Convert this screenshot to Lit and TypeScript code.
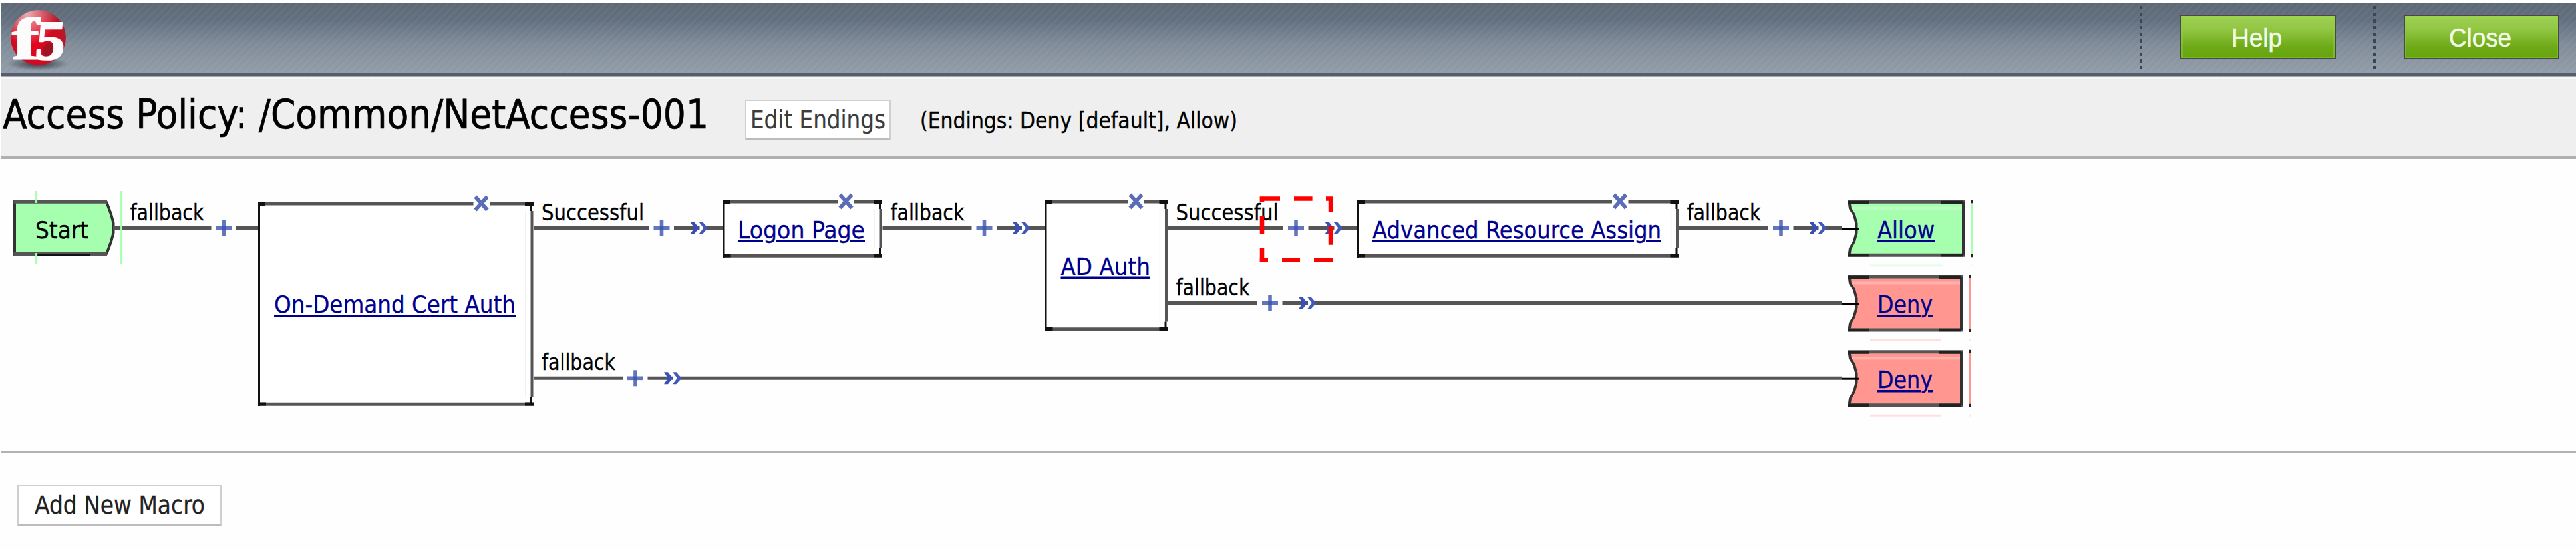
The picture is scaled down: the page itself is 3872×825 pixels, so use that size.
import { LitElement, html, svg, css } from "lit";
import { customElement } from "lit/decorators.js";

interface Item { name: string; x: number; y: number; w: number; h: number; tx: number; tw: number; ty: number; del: number; }
interface Branch { label: string; tw: number; x: number; y: number; gap: number; to: number; arrow: number; }
interface Ending { name: string; kind: string; y: number; right: number; tw: number; }

const ITEMS: Item[] = [
  { name: "On-Demand Cert Auth", x: 388, y: 303, w: 414, h: 307, tx: 412, tw: 363, ty: 470, del: 723.5 },
  { name: "Logon Page", x: 1086.5, y: 300, w: 239.5, h: 87, tx: 1109, tw: 191, ty: 357.5, del: 1271.5 },
  { name: "AD Auth", x: 1570.5, y: 300, w: 185, h: 197.5, tx: 1594.5, tw: 134.5, ty: 412.5, del: 1707.5 },
  { name: "Advanced Resource Assign", x: 2040, y: 300, w: 483.5, h: 87, tx: 2063, tw: 434, ty: 357.5, del: 2435 },
];

const BRANCHES: Branch[] = [
  { label: "fallback", tw: 111, x: 184, y: 342.5, gap: 317.5, to: 388, arrow: 0 },
  { label: "Successful", tw: 154, x: 802, y: 342.5, gap: 975.5, to: 1087, arrow: 1037.5 },
  { label: "fallback", tw: 111, x: 802, y: 568.3, gap: 936, to: 2768, arrow: 998 },
  { label: "fallback", tw: 111, x: 1326.5, y: 342.5, gap: 1460.5, to: 1571, arrow: 1522 },
  { label: "Successful", tw: 154, x: 1755.5, y: 342.5, gap: 1929, to: 2041, arrow: 1991.5 },
  { label: "fallback", tw: 111, x: 1755.5, y: 455.5, gap: 1890, to: 2768, arrow: 1952 },
  { label: "fallback", tw: 111, x: 2523.5, y: 342.5, gap: 2658, to: 2768, arrow: 2719.5 },
];

const ENDINGS: Ending[] = [
  { name: "Allow", kind: "allow", y: 300.7, right: 2953, tw: 86 },
  { name: "Deny", kind: "deny", y: 413.5, right: 2950, tw: 83 },
  { name: "Deny", kind: "deny", y: 526.2, right: 2950, tw: 83 },
];

const OX = 0;
const OY = 239;

/** One run of text set to an exact advance width. */
const fit = (text: string, width: number, height: number, base: number, cls: string) => html`
  <svg class="fit" width=${width} height=${height} viewBox="0 0 ${width} ${height}">
    <text class=${cls} x="0" y=${base} textLength=${width} lengthAdjust="spacingAndGlyphs">${text}</text>
  </svg>`;

@customElement("app-root")
export class AppRoot extends LitElement {
  static styles = css`
    :host { display: block; height: 825px; background: #fefefe; overflow: hidden;
      font-family: "DejaVu Sans Condensed", "DejaVu Sans", sans-serif; font-stretch: condensed; }
    .page { display: flex; flex-direction: column; padding: 4px 0 0 2px; height: 821px; }
    .bar { display: flex; align-items: flex-start; height: 106px; flex: none; padding-left: 10px;
      border-bottom: 4px solid #52606e; position: relative;
      background:
        repeating-linear-gradient(135deg, rgba(255,255,255,0) 0, rgba(255,255,255,.055) 4px, rgba(255,255,255,0) 8px),
        linear-gradient(#5a6773 0, #616e7e 25%, #7e8a97 58%, #929ca9 100%); }
    .logo { display: block; flex: none; }
    .spacer { flex: 1; }
    .sep { flex: none; margin-top: 3px; height: 96px;
      background: repeating-linear-gradient(transparent 0 2px, #3a4655 2px 7px, transparent 7px 10px); }
    .s1 { width: 3px; margin-right: 58px; }
    .s2 { width: 5px; margin: 3px 41px 0 56px; }
    .green { box-sizing: border-box; width: 234px; height: 67px; margin-top: 18px; flex: none;
      border: 2.5px solid #4a464e; display: flex; justify-content: center; align-items: flex-start; padding-right: 4px;
      background: linear-gradient(#a0d957 0, #9ccd51 8%, #92c744 30%, #6fab19 72%, #66a30d 100%);
      box-shadow: inset 0 0 0 2px rgba(140,215,50,.45); }
    .last { margin-right: 25.5px; }
    .title { display: flex; flex: none; height: 121px; border-bottom: 4px solid #b0b0b0; background: #efefef;
      box-shadow: inset 0 2px 0 #a8a8a8, inset 0 4px 0 #f6f6f6; padding-left: 2px; align-items: flex-start; }
    .btn { box-sizing: border-box; background: #fff; border: 2.5px solid #cfcfcf; border-bottom: 3px solid #bcbcbc;
      display: flex; align-items: flex-start; flex: none; }
    .edit { width: 219px; height: 61px; margin: 36px 44px 0 55px; padding-left: 6px; }
    .macro { width: 307px; height: 62px; margin: 48px 0 0 24px; padding-left: 24px; }
    .canvas { display: block; flex: none; margin-left: -2px; height: 439px; overflow: visible; }
    .rule { flex: none; height: 3px; background: #b2b2b2; }
    .fit { display: block; overflow: visible; flex: none; }
    .h1 { font-size: 61px; fill: #000; stroke: #000; stroke-width: .7; }
    .t-btn { font-size: 37px; fill: #3c3c3c; stroke: #3c3c3c; stroke-width: .2; }
    .t-macro { font-size: 37.5px; fill: #222; stroke: #222; stroke-width: .3; }
    .t-note { font-size: 33px; fill: #000; stroke: #000; stroke-width: .3; }
    .t-green { font-family: "Liberation Sans", sans-serif; font-size: 38.5px; fill: #f2f9e6; stroke: #f2f9e6; stroke-width: .6; }
    .f5 { font-family: "Liberation Serif", serif; font-weight: 700; fill: #fcfcfc; stroke: #fcfcfc; stroke-width: 2; stroke-linejoin: round; }
    .lbl { font-size: 33.5px; fill: #000; stroke: #000; stroke-width: .3; }
    .name { font-size: 36px; fill: #00008f; stroke: #00008f; stroke-width: .3; }
    .start { fill: #000; font-size: 36px; stroke: #000; stroke-width: .3; }
    .ul { stroke: #00008f; stroke-width: 3.4; }
    .wire { stroke: #555; stroke-width: 5; fill: none; }
    .v { stroke: #111; stroke-width: 3; }
    .cap { stroke: #111; stroke-width: 5; }
    .white { fill: #fff; }
    .plus { stroke: #3a54ac; stroke-opacity: .8; stroke-width: 5.6; fill: none; }
    .x { stroke: #5b6cb8; stroke-width: 5.8; fill: none; }
    .allow { fill: #a5ffaf; } .deny { fill: #ff9790; }
    .edge { fill: none; stroke: #333; stroke-width: 4; }
    .red { stroke: #f00; stroke-width: 6.5; fill: none; }
  `;

  private wire(b: Branch) {
    const cx = b.gap + 19;
    return svg`
      <path class="wire" d="M${b.x} ${b.y}H${b.gap}M${b.gap + 37.5} ${b.y}H${b.to}" />
      <path class="plus" d="M${cx - 12} ${b.y}H${cx + 12}" />
      <path class="plus" d="M${cx} ${b.y - 12}V${b.y + 12}" />
      ${b.arrow ? svg`
        <g transform="translate(${b.arrow} ${b.y - 9})">
          <rect x="14" y="5" width="10" height="8" fill="#fefefe" />
          <path d="M0 0H6L13 9L6 18H0L4 12V6Z" fill="#3a4fb5" />
          <path d="M13 0H18.500L26.500 9L18.500 18H13L20 9Z" fill="#4359b8" />
        </g>` : ""}
      <text class="lbl" x=${b.x < 200 ? 195.5 : b.x + 12} y=${b.y - 12}
        textLength=${b.tw} lengthAdjust="spacingAndGlyphs">${b.label}</text>`;
  }

  private item(i: Item) {
    const r = i.x + i.w, b = i.y + i.h;
    return svg`
      <rect class="white" x=${i.x} y=${i.y} width=${i.w} height=${i.h} />
      <path class="wire" d="M${i.x} ${i.y + 3}H${i.del - 12}M${i.del + 12.5} ${i.y + 3}H${r}M${i.x} ${b - 2.7}H${r}" />
      <path class="v" d="M${i.x + 1.5} ${i.y + 1}V${b}" />
      <path d="M${r - 2.5} ${i.y + 14}V${b - 14}" stroke="#555" stroke-width="4" />
      <path class="v" d="M${r - 3.500} ${i.y + 2}V${i.y + 14}M${r - 3.500} ${b - 14}V${b - 1}" />
      <path class="cap" d="M${i.x} ${i.y + 3.500}h11M${r - 13} ${i.y + 3.500}h13M${i.x} ${b - 3}h12M${r - 13} ${b - 3}h13" />
      <path d="M${r - 12} ${i.y + 14}V${b - 14}" stroke="#eee" stroke-width="1.5" />
      <path class="x" d="M${i.del - 9} ${i.y - 7.500}L${i.del + 9} ${i.y + 12.500}M${i.del + 9} ${i.y - 7.500}L${i.del - 9} ${i.y + 12.500}" />
      <text class="name" x=${i.tx} y=${i.ty} textLength=${i.tw} lengthAdjust="spacingAndGlyphs">${i.name}</text>
      ${this.underline(i.name, i.tx, i.tw, i.ty)}`;
  }

  private underline(name: string, x: number, w: number, y: number) {
    // Gaps where a descender crosses the line.
    const cuts: Record<string, [number, number][]> = {
      "Logon Page": [[38, 57], [150, 169]],
      "Advanced Resource Assign": [[393, 411]],
      Deny: [[66, 76]],
    };
    let d = "", p = x;
    for (const [a, b] of cuts[name] ?? []) { d += `M${p} ${y + 4.8}H${x + a}`; p = x + b; }
    d += `M${p} ${y + 4.8}H${x + w}`;
    return svg`<path class="ul" d=${d} />`;
  }

  private ending(e: Ending) {
    const t = e.y + 2.5, b = e.y + 82.5, m = e.y + 42, r = e.right - 2, s = e.right + 11.5;
    const c = e.kind === "allow" ? "#a5ffaf" : "#ff9790";
    const notch = `M2779.5 ${t}L2781 ${t + 10}L2787 ${m - 20}L2790.5 ${m - 7}V${m + 7}L2787 ${m + 20}L2781 ${b - 10}L2779.5 ${b}`;
    return svg`
      <path class=${e.kind} d="${notch}H${r}V${t}Z" />
      <path d="M2782 ${e.y + 12}H${r}" stroke="#fff" stroke-opacity=".25" stroke-width="4" />
      <path class="edge" d=${notch} />
      <path class="wire" d="M2777.500 ${t}H${e.right}M2777.500 ${b}H${e.right}" />
      <path class="edge" d="M${r} ${t}V${b}" />
      <path d="M2778 ${t + .8}H2810M${r - 33} ${t + .8}H${r}M2778 ${b}H2810M${r - 33} ${b}H${r}" stroke="#222" stroke-width="4.5" />
      <path d="M2768 ${m + 1}H2794" stroke="#000" stroke-width="3" />
      <path d="M${s} ${t}V${b}" stroke=${c} stroke-width="3" />
      <path d="M${s} ${e.y - .5}v5M${s} ${e.y + 80.500}v5" stroke="#222" stroke-width="3" />
      <path d="M2811 ${e.y + 98}H${r - 31}M${s - 1} ${e.y + 98}h2" stroke=${c} stroke-opacity=".28" stroke-width="3" />
      <text class="name" x="2822" y=${e.y + 56.8} textLength=${e.tw} lengthAdjust="spacingAndGlyphs">${e.name}</text>
      ${this.underline(e.name, 2822, e.tw, e.y + 56.8)}`;
  }

  render() {
    return html`
      <div class="page">
        <div class="bar">
          <svg class="logo" width="100" height="106" viewBox="12 4 100 106">
            <defs>
              <radialGradient id="ball" cx=".42" cy=".55" r=".62">
                <stop offset="0" stop-color="#e3051f" /><stop offset=".7" stop-color="#d00a20" /><stop offset="1" stop-color="#a8202c" />
              </radialGradient>
              <radialGradient id="shine" cx=".3" cy=".08" r=".55">
                <stop offset="0" stop-color="#fff" stop-opacity=".65" /><stop offset="1" stop-color="#fff" stop-opacity="0" />
              </radialGradient>
              <radialGradient id="shade">
                <stop offset="0" stop-color="#2a323b" stop-opacity=".9" /><stop offset="1" stop-color="#2a323b" stop-opacity="0" />
              </radialGradient>
            </defs>
            <ellipse cx="57" cy="96" rx="46" ry="10" fill="url(#shade)" />
            <circle cx="57.500" cy="56.500" r="41.500" fill="url(#ball)" />
            <circle cx="57.500" cy="56.500" r="41.500" fill="url(#shine)" />
            <circle cx="75" cy="76" r="11" fill="#7c1c24" opacity=".6" />
            <text class="f5" x="18" y="88" font-size="88" textLength="41" lengthAdjust="spacingAndGlyphs">f</text>
            <text class="f5" x="0" y="0" font-size="84" textLength="45" lengthAdjust="spacingAndGlyphs" transform="translate(51 88.500) skewX(-5)">5</text>
          </svg>
          <span class="spacer"></span>
          <span class="sep s1"></span>
          <div class="green">${fit("Help", 76, 62, 45.5, "t-green")}</div>
          <span class="sep s2"></span>
          <div class="green last">${fit("Close", 94, 62, 45.5, "t-green")}</div>
        </div>
        <div class="title">
          ${fit("Access Policy: /Common/NetAccess-001", 1061, 100, 78.8, "h1")}
          <div class="btn edit">${fit("Edit Endings", 203, 55, 40.500, "t-btn")}</div>
          ${fit("(Endings: Deny [default], Allow)", 477, 100, 78.8, "t-note")}
        </div>
        <svg class="canvas" width="3872" height="439" viewBox="${OX} ${OY} 3872 439">
          <path d="M22 303H160L167 322L171 335V350L167 363L160 382H22Z" class="allow" />
          <path class="edge" d="M22 301V384M160 303L167 322L170.500 335V350L167 363L160 382" />
          <path class="wire" d="M20.500 303.200H161M20.500 381.500H161M170 342.500H188" />
          <path d="M55 383H135" stroke="#111" stroke-width="3" />
          <path d="M54.600 287V305M54.600 380V397M182.600 287V397" stroke="#a5ffaf" stroke-width="3" />
          <text class="start" x="53" y="357.700" textLength="80" lengthAdjust="spacingAndGlyphs">Start</text>
          ${BRANCHES.map((b) => this.wire(b))}
          ${ITEMS.map((i) => this.item(i))}
          ${ENDINGS.map((e) => this.ending(e))}
          <path class="red" d="M1893.600 298.500H1924M1945 298.500H1972.600M1993 298.500H2003M1897 296V303M1897 324V351.700M1897 372V394M1893.600 390.500H1906M1927 390.500H1954M1975 390.500H2003M2000 296V319M2000 339.700V367.700" />
        </svg>
        <div class="rule"></div>
        <div class="btn macro">${fit("Add New Macro", 256, 56, 40.500, "t-macro")}</div>
      </div>`;
  }
}
